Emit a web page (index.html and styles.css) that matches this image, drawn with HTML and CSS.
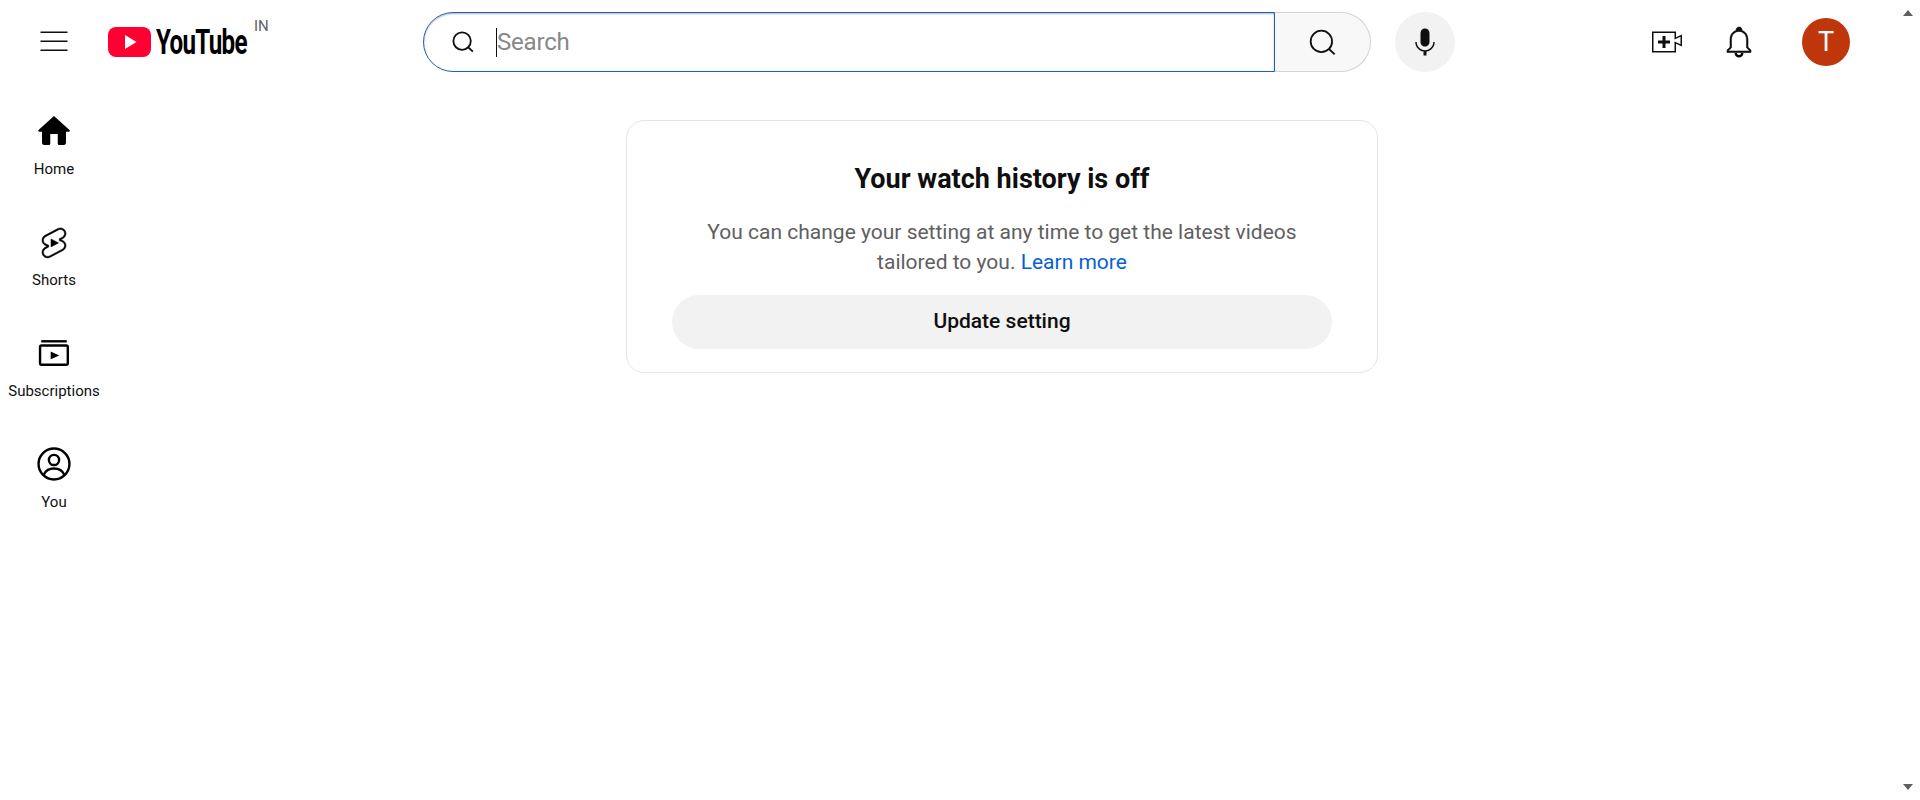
FILE: index.html
```html
<!DOCTYPE html>
<html>
<head>
  <title>YouTube - Watch history</title>
  <link rel="stylesheet" href="styles.css">
</head>
<body>
  <div id="page">
    <header class="masthead">
      <div class="start">
        <svg class="icon menu-icon" viewBox="0 0 24 24"><path d="M21 6H3V5h18v1zm0 5H3v1h18v-1zm0 6H3v1h18v-1z"/></svg>
        <svg class="logo-mark" viewBox="0 0 43 30"><rect width="43" height="30" rx="8" fill="#ff0033"/><path d="M17 8l11.500 7L17 22z" fill="#fff"/></svg>
        <span class="wordmark">YouTube</span>
        <span class="country">IN</span>
      </div>

      <div class="search">
        <div class="search-box">
          <svg class="search-small" viewBox="0 0 24 24"><circle cx="11" cy="11" r="9.500"/><path d="M17.800 17.800l5 4.700"/></svg>
          <span class="caret"></span>
          <span class="placeholder">Search</span>
        </div>
        <div class="search-btn">
          <svg class="search-large" viewBox="0 0 24 24"><circle cx="11" cy="11" r="9.500"/><path d="M17.800 17.800l5 4.700"/></svg>
        </div>
      </div>

      <div class="mic">
        <svg class="icon" viewBox="0 0 24 24"><path d="M12 3C10.340 3 9 4.370 9 6.070V11.930C9 13.630 10.340 15 12 15C13.660 15 15 13.630 15 11.930V6.070C15 4.370 13.660 3 12 3ZM18.500 12H17.500C17.500 15.030 15.030 17.500 12 17.500C8.970 17.500 6.500 15.030 6.500 12H5.500C5.500 15.240 7.890 17.930 11 18.410V21H13V18.410C16.110 17.930 18.500 15.240 18.500 12Z"/></svg>
      </div>

      <div class="end">
        <svg class="icon" viewBox="0 0 24 24"><path d="M14 13h-3v3H9v-3H6v-2h3V8h2v3h3v2zm3-7H3v12h14v-6.390l4 1.830V8.560l-4 1.830V6m1-1v3.830L22 7v8l-4-1.830V19H2V5h16z"/></svg>
        <svg class="icon heavy" viewBox="0 0 24 24"><path d="M20 17.350V19H4v-1.650l2-1.880v-5.150C6 7.400 7.560 5.100 10 4.340v-.38c0-1.420 1.490-2.500 2.990-1.760.65.320 1.010 1.030 1.010 1.760v.39c2.440.750 4 3.060 4 5.980v5.150l2 1.870zm-1 .42-2-1.880v-5.470c0-2.470-1.190-4.360-3.130-5.100-1.260-.530-2.640-.500-3.840.030C8.150 6.110 7 7.990 7 10.420v5.470l-2 1.880V18h14v-.230z"/><path class="clapper" d="M9.800 19.300a2.200 2.200 0 0 0 4.400 0"/></svg>
        <div class="avatar">T</div>
      </div>
    </header>

    <div class="content">
      <nav class="guide">
        <a class="guide-item">
          <svg class="icon dark" viewBox="0 0 24 24"><path d="M12 2L1.500 11.500Q1.300 12.500 2.300 12.500H4V19.500Q4 21.300 5.500 21.300H8.500Q9.500 21.300 9.500 20.300V14H14.500V20.300Q14.500 21.300 15.500 21.300H18.500Q20 21.300 20 19.500V12.500H21.700Q22.700 12.500 22.500 11.500Z"/></svg>
          <span>Home</span>
        </a>
        <a class="guide-item">
          <svg class="icon dark heavy" viewBox="0 -0.600 24 24"><path d="M10 14.650v-5.300L15 12l-5 2.650zm7.770-4.330-1.200-.500L18 9.060c1.840-.960 2.530-3.230 1.560-5.060s-3.240-2.530-5.070-1.560L6 6.940c-1.290.680-2.070 2.040-2 3.490.070 1.420.930 2.670 2.220 3.250.030.010 1.200.500 1.200.500L6 14.930c-1.830.970-2.530 3.240-1.560 5.070.970 1.830 3.240 2.530 5.070 1.560l8.500-4.500c1.290-.680 2.060-2.040 1.990-3.490-.070-1.420-.940-2.680-2.230-3.250zm-.230 5.860l-8.500 4.500c-1.340.710-3.010.200-3.720-1.140-.710-1.340-.200-3.010 1.140-3.720l2.040-1.080v-1.210l-.690-.280-1.110-.460c-.990-.410-1.650-1.350-1.700-2.410-.050-1.060.520-2.060 1.460-2.560l8.500-4.500c1.340-.710 3.010-.200 3.720 1.140.710 1.340.200 3.010-1.140 3.720L15.500 9.260v1.210l1.800.740c.990.410 1.650 1.350 1.700 2.410.050 1.060-.520 2.060-1.460 2.560z"/></svg>
          <span>Shorts</span>
        </a>
        <a class="guide-item">
          <svg class="icon dark" viewBox="0 0 24 24"><rect class="line" x="2.700" y="7" width="18.500" height="12.800" rx="1"/><path class="line" d="M3.500 4.200H20.500"/><path d="M9.800 11l5.700 2.600-5.700 2.600z"/></svg>
          <span>Subscriptions</span>
        </a>
        <a class="guide-item">
          <svg class="icon dark" viewBox="0 0 24 24"><circle class="line" cx="12" cy="12" r="10.300"/><circle class="line" cx="12" cy="9.300" r="3.400"/><path class="line" d="M5 19.400C6.500 15.800 9 15 12 15s5.500.800 7 4.400"/></svg>
          <span>You</span>
        </a>
      </nav>

      <main class="main">
        <section class="card">
          <h2>Your watch history is off</h2>
          <p>You can change your setting at any time to get the latest videos tailored to you. <a href="#">Learn more</a></p>
          <button>Update setting</button>
        </section>
      </main>
    </div>
  </div>

  <div class="arrow arrow-up"></div>
  <div class="arrow arrow-down"></div>
</body>
</html>
```

FILE: styles.css
```css
html, body {
  margin: 0;
  height: 100%;
  overflow: hidden;
  background: #fff;
}
body {
  font-family: Roboto, "Liberation Sans", sans-serif;
  color: #0f0f0f;
}
.icon {
  width: 36px;
  height: 36px;
  display: block;
  flex: none;
  fill: #0f0f0f;
}
.icon.dark {
  fill: #000;
}
.icon.heavy > path:first-child {
  stroke: #000;
  stroke-width: 0.350;
}
.icon .line, .icon .clapper {
  fill: none;
  stroke: #000;
  stroke-width: 1.600;
}

/* top bar */
.masthead {
  display: flex;
  align-items: center;
  height: 84px;
}
.start {
  width: 423px;
  height: 84px;
  display: flex;
  align-items: center;
  flex: none;
  padding-left: 36px;
  box-sizing: border-box;
}
.menu-icon {
  margin-top: -1px;
}
.logo-mark {
  width: 43px;
  height: 30px;
  margin-left: 36px;
  flex: none;
}
.wordmark {
  width: 92px;
  margin-left: 5px;
  font-size: 35px;
  font-weight: 700;
  letter-spacing: -1px;
  white-space: nowrap;
  transform: scaleX(0.69);
  transform-origin: left center;
  color: #000;
}
.country {
  margin: -33px 0 0 6px;
  font-size: 15px;
  color: #606060;
}
.search {
  display: flex;
  width: 948px;
  height: 60px;
  flex: none;
}
.search-box {
  flex: 1;
  display: flex;
  align-items: center;
  border: 1px solid #1c62b9;
  border-radius: 30px 0 0 30px;
  box-shadow: inset 0 1px 2px rgba(0, 0, 0, 0.3);
  padding-left: 28px;
}
.search-small {
  width: 22px;
  height: 22px;
  fill: none;
  stroke: #0f0f0f;
  stroke-width: 2;
  flex: none;
}
.caret {
  width: 1px;
  height: 29px;
  background: #0f0f0f;
  margin-left: 22px;
}
.placeholder {
  font-size: 24px;
  letter-spacing: -0.2px;
  color: #888;
}
.search-btn {
  width: 95px;
  display: flex;
  align-items: center;
  justify-content: center;
  background: #f8f8f8;
  border: 1px solid #d3d3d3;
  border-left: none;
  border-radius: 0 30px 30px 0;
}
.search-large {
  width: 27px;
  height: 27px;
  fill: none;
  stroke: #0f0f0f;
  stroke-width: 1.600;
}
.mic {
  width: 60px;
  height: 60px;
  margin-left: 24px;
  border-radius: 50%;
  background: #f2f2f2;
  display: flex;
  align-items: center;
  justify-content: center;
  flex: none;
}
.end {
  margin-left: auto;
  padding-right: 70px;
  display: flex;
  align-items: center;
  gap: 36px;
}
.avatar {
  width: 48px;
  height: 48px;
  margin-left: 9px;
  border-radius: 50%;
  background: #bf360c;
  color: #fff;
  font-size: 27px;
  line-height: 48px;
  text-align: center;
}

/* guide + main */
.content {
  display: flex;
}
.guide {
  width: 108px;
  padding-top: 5px;
  flex: none;
  display: flex;
  flex-direction: column;
}
.guide-item {
  height: 111px;
  box-sizing: border-box;
  padding-top: 24px;
  display: flex;
  flex-direction: column;
  align-items: center;
  font-size: 15px;
  line-height: 21px;
  white-space: nowrap;
}
.guide-item span {
  margin-top: 10px;
}
.main {
  flex: 1;
  padding: 36px 24px 0 0;
  display: flex;
  justify-content: center;
}
.card {
  width: 752px;
  height: 253px;
  box-sizing: border-box;
  border: 1px solid #e5e5e5;
  border-radius: 18px;
  padding: 42px 45px 0;
  text-align: center;
}
.card h2 {
  margin: 0;
  font-size: 27px;
  line-height: 33px;
  font-weight: 700;
}
.card p {
  margin: 21px 0 0;
  font-size: 21px;
  line-height: 30px;
  color: #606060;
}
.card a {
  color: #065fd4;
  text-decoration: none;
}
.card button {
  display: block;
  width: 100%;
  height: 54px;
  margin-top: 18px;
  padding: 0 0 2px;
  border: none;
  border-radius: 27px;
  background: #f2f2f2;
  color: #0f0f0f;
  font-family: inherit;
  font-size: 21px;
  font-weight: 500;
}

/* scrollbar arrows */
.arrow {
  position: fixed;
  right: 7px;
  width: 0;
  height: 0;
  border-left: 5.500px solid transparent;
  border-right: 5.500px solid transparent;
}
.arrow-up {
  top: 10px;
  border-bottom: 6px solid #606060;
}
.arrow-down {
  bottom: 10px;
  border-top: 6px solid #606060;
}
```
